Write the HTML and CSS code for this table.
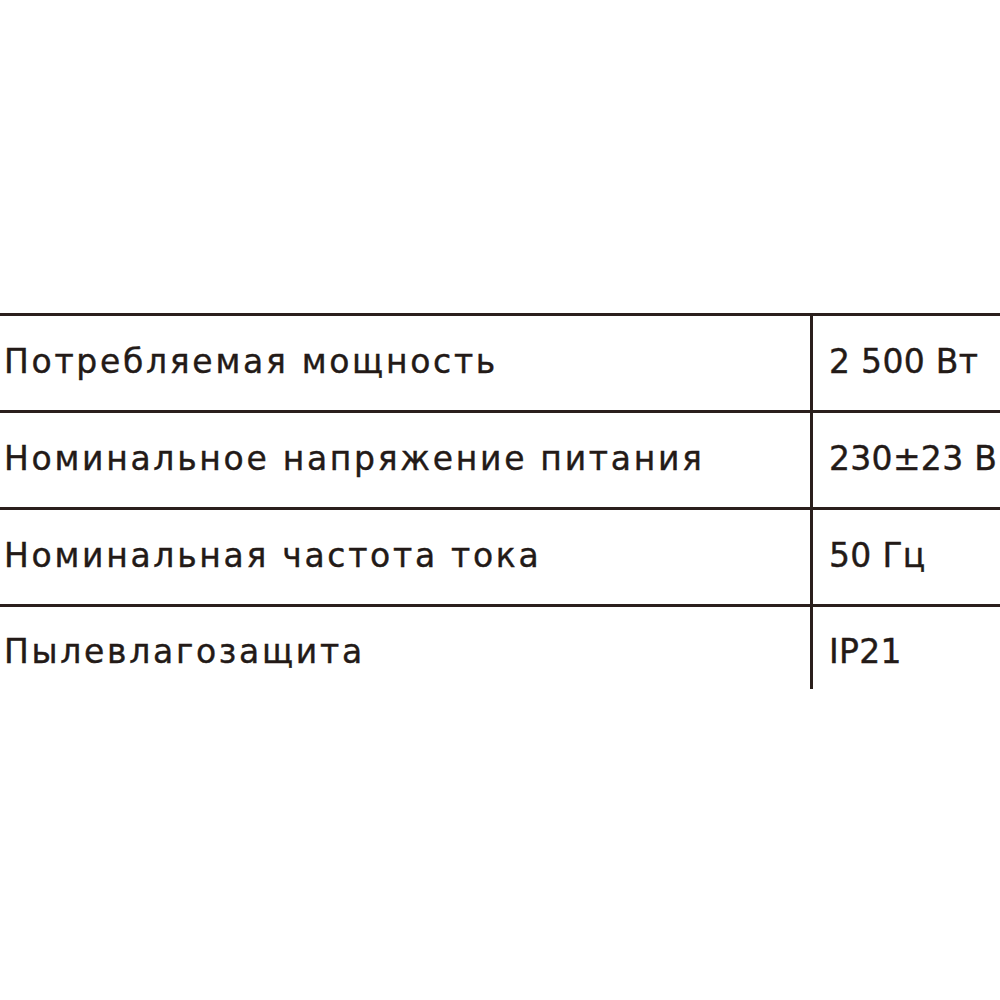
FILE: index.html
```
<!DOCTYPE html>
<html lang="ru">
<head>
<meta charset="utf-8">
<link rel="stylesheet" href="styles.css">
</head>
<body>
<div class="specs">
  <div class="row">
    <div class="name">Потребляемая мощность</div>
    <div class="value">2 500 Вт</div>
  </div>
  <div class="row">
    <div class="name">Номинальное напряжение питания</div>
    <div class="value">230±23 В</div>
  </div>
  <div class="row">
    <div class="name">Номинальная частота тока</div>
    <div class="value">50 Гц</div>
  </div>
  <div class="row last">
    <div class="name">Пылевлагозащита</div>
    <div class="value">IP21</div>
  </div>
</div>
</body>
</html>
```
FILE: styles.css
```
html, body {
  margin: 0;
  padding: 0;
  background: #ffffff;
}
body {
  font-family: "DejaVu Sans", sans-serif;
  color: #231a17;
}
.specs {
  margin-top: 313px;
}
.row {
  display: flex;
  height: 94px;
  border-top: 3px solid #2a1f1c;
}
.row.last {
  height: 82px;
}
.name {
  width: 813px;
  flex: none;
  border-right: 3px solid #2a1f1c;
  padding-left: 4px;
  padding-top: 26px;
  font-size: 33px;
  letter-spacing: 2.7px;
  -webkit-text-stroke: 0.4px #231a17;
  box-sizing: border-box;
  white-space: nowrap;
}
.value {
  padding-left: 16px;
  padding-top: 26px;
  font-size: 33px;
  letter-spacing: 0.3px;
  -webkit-text-stroke: 0.4px #231a17;
  white-space: nowrap;
}
.row.last .name, .row.last .value {
  padding-top: 25px;
}
```
